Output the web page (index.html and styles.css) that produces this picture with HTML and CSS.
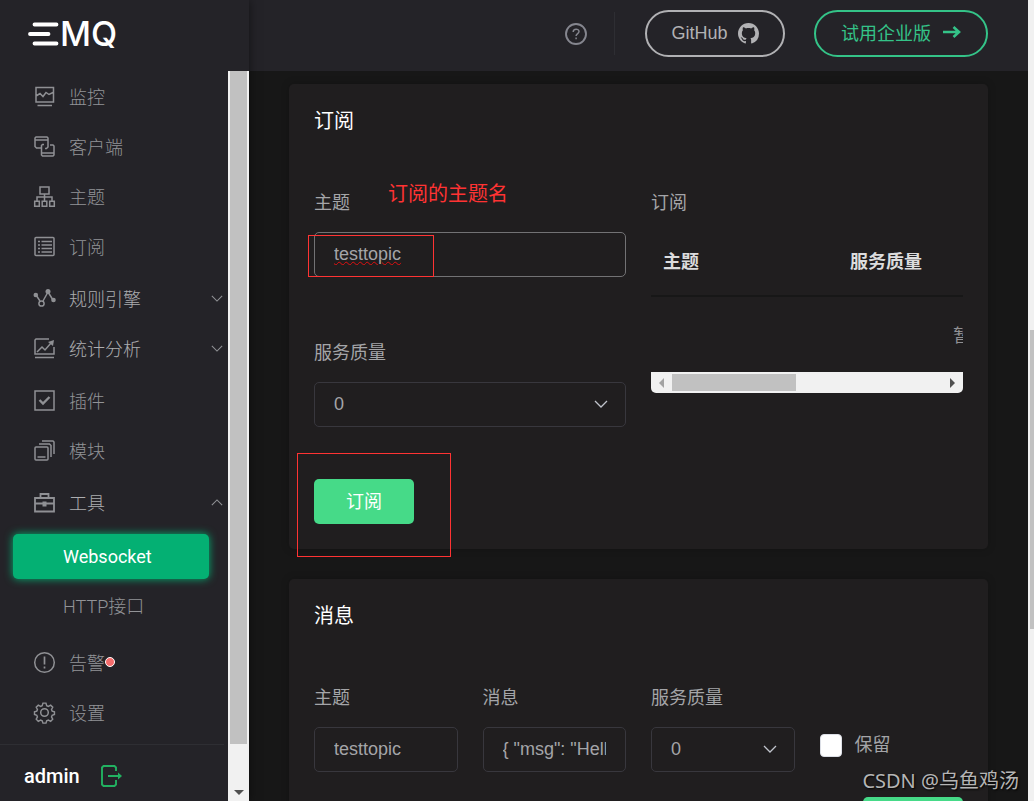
FILE: index.html
```html
<!DOCTYPE html>
<html lang="zh-CN">
<head>
<meta charset="utf-8">
<title>EMQ - Websocket</title>
<link rel="stylesheet" href="styles.css">
</head>
<body>
<svg class="defs" aria-hidden="true">
  <symbol id="down" viewBox="0 0 14 8"><path d="M1 1l6 6 6-6" fill="none" stroke="currentColor" stroke-width="1.3"/></symbol>
</svg>
<div class="app">
  <aside class="sidebar">
    <a class="logo" href="#" aria-label="EMQ">
      <svg class="logo-bars" viewBox="0 0 33 26"><path d="M7.500 3.500H29.500M3 13H21.500M7.500 22.500H29.500" fill="none" stroke="#fff" stroke-width="3.800" stroke-linecap="round"/></svg>
      <span class="logo-text">MQ</span>
    </a>
    <div class="sidebar-body">
      <div class="sidebar-content">
        <nav class="nav">
          <ul class="group">
            <li><a class="item" href="#"><svg class="icon" viewBox="0 0 21 21"><path d="M2 1.500h17.500v14.500H2zM3.500 19.500h14.500M2 10l4-2.500 3 3 3-4 3 2 4-2"/></svg>监控</a></li>
            <li><a class="item" href="#"><svg class="icon" viewBox="0 0 21 21"><path d="M5 12H2.500L1 10.500V2l1-1h11l1 1v4M1 4h13M10 8.500H8.500l-1 1V19l1 1H19l1-1V10l-1-1h-3M7.500 17H20M7.500 12H5M14 6v5l-1.500 1.500H11"/></svg>客户端</a></li>
            <li><a class="item" href="#"><svg class="icon" viewBox="0 0 21 21"><path d="M6 1h9v7H6zM10.500 8v7M3 15v-4h15v4M.7 15.300h4.600v5H.7zM8.200 15.300h4.600v5H8.200zM15.700 15.300h4.600v5h-4.600z"/></svg>主题</a></li>
            <li><a class="item" href="#"><svg class="icon" viewBox="0 0 21 21"><rect x="1" y="1.500" width="19" height="18" rx="1"/><path d="M4 5.500h2M7.500 5.500H18M4 9h2M7.500 9H18M4 12.500h2M7.500 12.500H18M4 16h2M7.500 16H18"/></svg>订阅</a></li>
          </ul>
          <ul class="group">
            <li><a class="item bright" href="#"><svg class="icon" viewBox="0 0 21 21"><path d="M2 7l4 6M9 13l5-9M14 4l5 8"/><circle cx="7.500" cy="15.500" r="2.600"/><g fill="currentColor" stroke="none"><circle cx="1.800" cy="7" r="2.300"/><circle cx="14" cy="3.500" r="2.500"/><circle cx="19.500" cy="12" r="2.300"/></g></svg>规则引擎<svg class="arrow"><use href="#down"/></svg></a></li>
            <li><a class="item bright" href="#"><svg class="icon" viewBox="0 0 21 21"><path d="M15 1H2L1 2v14h19V9M1 19.500h19M3 14l5-5 3 3 6-7"/><path d="M14 4l6-2-1 6z" fill="currentColor" stroke="none"/></svg>统计分析<svg class="arrow"><use href="#down"/></svg></a></li>
          </ul>
          <ul class="group">
            <li><a class="item" href="#"><svg class="icon" viewBox="0 0 21 21"><path d="M1 1h19v19H1z"/><path d="M5.500 10l3.500 3.500L15.500 7" stroke-width="2.400"/></svg>插件</a></li>
            <li><a class="item" href="#"><svg class="icon" viewBox="0 0 21 21"><rect x="1" y="7" width="13" height="13" rx="1"/><path d="M3.500 17h8M5 4h10.500L17 5.500V17M8 1h11l1 1v12"/></svg>模块</a></li>
          </ul>
          <ul class="group">
            <li><a class="item bright" href="#"><svg class="icon" viewBox="0 0 21 21"><path d="M1 6h19v13.500H1zM1 11.500h19M6.500 6V2h8v4" stroke-width="1.800"/><path d="M8.500 9.500h4v5h-4z" fill="currentColor" stroke="none"/></svg>工具<svg class="arrow up"><use href="#down"/></svg></a>
              <ul class="sub">
                <li><a class="sub-item active" href="#">Websocket</a></li>
                <li><a class="sub-item" href="#">HTTP接口</a></li>
              </ul>
            </li>
          </ul>
          <ul class="group">
            <li><a class="item" href="#"><svg class="icon" viewBox="0 0 21 21"><circle cx="10.500" cy="10.500" r="9.800"/><path d="M10.500 4.500v8M10.500 14.500v2" stroke-width="1.700"/></svg><span class="alarm">告警<i class="dot"></i></span></a></li>
            <li><a class="item" href="#"><svg class="icon" viewBox="0 0 21 21"><circle cx="10.500" cy="10.500" r="3.800"/><path d="M8.900 1h3.200l.7 2.600 1.800.8 2.400-1.300 2.200 2.200-1.300 2.400.7 1.700 2.400.7v2.800l-2.400.9-.7 1.700 1.300 2.400-2.200 2.200-2.400-1.300-1.800.7-.7 2.500H8.900l-.8-2.500-1.700-.7L4 20.100l-2.200-2.200 1.300-2.400-.7-1.700L0 12.900v-2.800l2.400-.7.700-1.700-1.300-2.400L4 3.100l2.400 1.300 1.700-.8z" transform="translate(.5 .2) scale(.95)"/></svg>设置</a></li>
          </ul>
        </nav>
        <div class="user">
          <span class="user-name">admin</span>
          <button class="logout" type="button" aria-label="退出"><svg viewBox="0 0 21 22"><path d="M15 6V2.500L13.500 1h-11L1 2.500v17L2.500 21h11l1.500-1.500V15M7 11h12" fill="none" stroke="currentColor" stroke-width="1.900"/><path d="M17 7.500l4 3.500-4 3.500z" fill="currentColor"/></svg></button>
        </div>
      </div>
      <div class="v-scroll" aria-hidden="true"><div class="v-thumb"></div><i class="tri tri-down"></i></div>
    </div>
  </aside>

  <div class="page">
    <header class="topbar">
      <a class="help" href="#" aria-label="帮助"><svg viewBox="0 0 22 22" fill="none" stroke="currentColor"><circle cx="11" cy="11" r="10" stroke-width="1.900"/><path d="M8.200 9c0-3.800 5.800-3.700 5.800-.4 0 2-2.900 2.100-2.900 4.400M11.100 14.500v1.800" stroke-width="1.500"/></svg></a>
      <span class="divider"></span>
      <a class="pill" href="#">GitHub<svg class="octo" viewBox="0 0 16 16"><path fill="currentColor" d="M8 0C3.580 0 0 3.580 0 8c0 3.540 2.290 6.530 5.470 7.590.4.070.55-.17.55-.38 0-.19-.01-.82-.01-1.490-2.010.37-2.530-.49-2.690-.94-.09-.23-.48-.94-.82-1.130-.28-.15-.68-.52-.01-.53.63-.01 1.080.58 1.230.82.72 1.210 1.870.87 2.330.66.07-.52.28-.87.51-1.070-1.780-.2-3.640-.89-3.640-3.950 0-.87.31-1.590.82-2.150-.08-.2-.36-1.020.08-2.120 0 0 .67-.21 2.200.82.64-.18 1.320-.27 2-.27s1.360.09 2 .27c1.530-1.040 2.200-.82 2.200-.82.44 1.100.16 1.920.08 2.120.51.56.82 1.270.82 2.150 0 3.070-1.870 3.750-3.650 3.950.29.25.54.73.54 1.480 0 1.070-.01 1.930-.01 2.200 0 .21.15.46.55.38A8.010 8.010 0 0016 8c0-4.420-3.580-8-8-8z"/></svg></a>
      <a class="pill green" href="#">试用企业版<svg class="go" viewBox="0 0 18 12"><path d="M0 6h16M10.500 1l5.500 5-5.500 5" fill="none" stroke="currentColor" stroke-width="2.600"/></svg></a>
    </header>
    <main class="content">
      <section class="card">
        <h2 class="title">订阅</h2>
        <div class="cols two">
          <form class="form">
            <div class="field">
              <label class="label" for="sub-topic">主题</label>
              <div class="control">
                <input class="box focus" id="sub-topic" type="text" value="testtopic">
                <i class="mark mark-input"></i>
                <span class="note">订阅的主题名</span>
              </div>
            </div>
            <div class="field">
              <label class="label" for="sub-qos">服务质量</label>
              <div class="control">
                <select class="box" id="sub-qos"><option>0</option></select>
                <svg class="caret"><use href="#down"/></svg>
              </div>
            </div>
            <div class="submit">
              <button class="btn" type="button">订阅</button>
              <i class="mark mark-button"></i>
            </div>
          </form>
          <div class="list">
            <p class="label">订阅</p>
            <div class="table-wrap">
              <table class="table">
                <thead><tr><th class="col-topic">主题</th><th>服务质量</th></tr></thead>
                <tbody><tr><td colspan="2">暂无数据</td></tr></tbody>
              </table>
            </div>
            <div class="h-scroll" aria-hidden="true"><i class="tri tri-left"></i><div class="h-track"><div class="h-thumb"></div></div><i class="tri tri-right"></i></div>
          </div>
        </div>
      </section>

      <section class="card">
        <h2 class="title">消息</h2>
        <form>
          <div class="cols four">
            <div class="field">
              <label class="label" for="msg-topic">主题</label>
              <input class="box" id="msg-topic" type="text" value="testtopic">
            </div>
            <div class="field">
              <label class="label" for="msg-body">消息</label>
              <input class="box" id="msg-body" type="text" value='{ "msg": "Hello, World!" }'>
            </div>
            <div class="field">
              <label class="label" for="msg-qos">服务质量</label>
              <div class="control">
                <select class="box" id="msg-qos"><option>0</option></select>
                <svg class="caret"><use href="#down"/></svg>
              </div>
            </div>
            <label class="retain"><input class="check" type="checkbox">保留</label>
          </div>
          <div class="publish"><button class="btn" type="button" aria-label="发布"></button></div>
        </form>
      </section>
    </main>
  </div>
  <div class="page-scroll" aria-hidden="true"><div class="page-thumb"></div></div>
  <div class="watermark">CSDN @乌鱼鸡汤</div>
</div>
</body>
</html>
```

FILE: styles.css
```css
* { box-sizing: border-box; }
body {
  margin: 0;
  background: #171717;
  color: #a4a5a8;
  font: 18px "Liberation Sans", "Noto Sans CJK SC", sans-serif;
}
ul, h2, p { margin: 0; padding: 0; list-style: none; }
a { color: inherit; text-decoration: none; }
button, input, select { font: inherit; color: inherit; }
svg { display: block; flex: none; }
.defs { position: absolute; width: 0; height: 0; }

.app { position: relative; display: flex; height: 100vh; overflow: hidden; }

/* Sidebar */
.sidebar {
  position: relative;
  z-index: 1;
  display: flex;
  flex-direction: column;
  flex: none;
  width: 249px;
  background: #242328;
  box-shadow: 0 0 10px rgba(0, 0, 0, 0.5);
}
.logo { display: flex; align-items: center; height: 71px; padding: 0 0 3px 27px; color: #fff; }
.logo-bars { width: 33px; height: 26px; }
.logo-text { font: 500 34px/36px Inter, sans-serif; }
.sidebar-body { display: flex; flex: 1; min-height: 0; }
.sidebar-content { display: flex; flex-direction: column; flex: 1; min-width: 0; }
.nav {
  display: flex;
  flex-direction: column;
  flex: 1;
  gap: 2px;
  min-height: 0;
  overflow: hidden;
  color: #929397;
  font-family: Roboto, "Noto Sans CJK SC", sans-serif;
  font-weight: 300;
}
.item { display: flex; align-items: center; gap: 14px; height: 50px; padding: 0 5px 0 34px; }
.bright { color: #acadb0; }
.icon { width: 21px; height: 21px; fill: none; stroke: #8f9094; stroke-width: 1.5; color: #8f9094; overflow: visible; }
.arrow { width: 12px; height: 7px; margin-left: auto; color: #8f9094; }
.up { transform: rotate(180deg); }
.sub { padding: 5px 0 3px; }
.sub li { padding: 2px 19px 3px 13px; }
.sub-item { display: block; height: 45px; padding-left: 50px; border-radius: 5px; line-height: 46px; }
.active { background: #04b073; color: #fff; font-weight: 400; box-shadow: 0 0 8px #04b073; }
.alarm { position: relative; }
.dot {
  position: absolute;
  right: -10px;
  top: 50%;
  width: 10px;
  height: 10px;
  margin-top: -5px;
  border: 1px solid #fff;
  border-radius: 50%;
  background: #f56c6c;
}
.user {
  display: flex;
  align-items: center;
  gap: 21px;
  height: 57px;
  margin-right: 4px;
  padding: 6px 0 0 24px;
  border-top: 1px solid #2e2e33;
}
.user-name { color: #fff; font: 500 20px/24px Roboto, sans-serif; }
.logout { width: 21px; height: 22px; padding: 0; border: 0; background: none; color: #22b161; }

.v-scroll { display: flex; flex-direction: column; align-items: center; justify-content: space-between; width: 21px; padding: 0 2px 6px; background: #f1f1f1; }
.v-thumb { width: 100%; height: 93%; background: #c1c1c1; }
.tri { border: 5px solid transparent; }
.tri-down { border-top-color: #505050; border-bottom: 0; }
.tri-left { border-right-color: #a3a3a3; border-left: 0; }
.tri-right { border-left-color: #505050; border-right: 0; }

/* Page */
.page { flex: 1; min-width: 0; }
.topbar { display: flex; align-items: center; justify-content: flex-end; height: 71px; padding: 0 40px 4px 0; background: #242328; }
.help { color: #85868f; }
.help svg { width: 22px; height: 22px; }
.divider { width: 1px; height: 43px; margin: 0 30px 0 27px; background: #2e2e33; }
.pill {
  display: flex;
  align-items: center;
  justify-content: center;
  gap: 10px;
  width: 140px;
  height: 47px;
  border: 2px solid #b1b1b4;
  border-radius: 24px;
  color: #b1b1b4;
}
.green { width: 174px; gap: 12px; margin-left: 29px; padding-bottom: 3px; border-color: #34c388; color: #34c388; }
.octo { width: 21px; height: 21px; }
.go { width: 18px; height: 12px; }

.content { display: flex; flex-direction: column; gap: 30px; padding: 13px 40px; }
.card { padding: 25px; border-radius: 5px; background: #201e1f; box-shadow: 0 0 8px rgba(0, 0, 0, 0.2); }
.title { margin-bottom: 58px; color: #fff; font-size: 20px; font-weight: 400; line-height: 24px; }
.cols { display: grid; gap: 25px; }
.two { grid-template-columns: repeat(2, minmax(0, 1fr)); }
.four { grid-template-columns: repeat(4, minmax(0, 1fr)); }
.form { display: flex; flex-direction: column; gap: 64px; }
.label { display: block; margin-bottom: 16px; line-height: 25px; }
.control { position: relative; }
.box {
  display: block;
  width: 100%;
  height: 45px;
  padding: 0 19px;
  border: 1px solid #38373d;
  border-radius: 5px;
  outline: 0;
  background: transparent;
  appearance: none;
}
select.box { padding-bottom: 2px; }
.focus { border-color: #727274; text-decoration: underline wavy #e01010 1px; }
.caret { position: absolute; right: 18px; top: 18px; width: 14px; height: 8px; color: #c0c4cc; pointer-events: none; }
.submit { position: relative; margin-top: -12px; }
.btn { display: block; width: 100px; height: 45px; padding: 0 0 4px; border: 0; border-radius: 5px; background: #46da88; color: #fff; }

.mark { position: absolute; border: 1px solid #f33; }
.mark-input { left: -6px; top: 3px; width: 126px; height: 42px; }
.mark-button { left: -17px; top: -26px; width: 154px; height: 104px; }
.note { position: absolute; left: 74px; top: -51px; color: #f33; font-size: 20px; line-height: 26px; white-space: nowrap; }

.list .label { margin-bottom: 11px; }
.table-wrap { overflow: hidden; }
.table { width: 676px; border-collapse: collapse; table-layout: fixed; }
.table th { height: 69px; padding: 0 12px 2px; border-bottom: 2px solid #171717; color: #dcdcdd; text-align: left; }
.table td { height: 76px; padding: 0 0 2px; text-align: center; color: #909093; }
.col-topic { width: 187px; }
.h-scroll { display: flex; align-items: center; justify-content: space-between; height: 21px; padding: 0 8px; border-radius: 0 0 5px 5px; background: #f1f1f1; }
.h-track { flex: 1; margin: 0 8px; }
.h-thumb { width: 46%; height: 17px; background: #c1c1c1; }

.retain { display: flex; align-items: center; gap: 13px; height: 36px; margin-top: 41px; line-height: 24px; }
.check { width: 22px; height: 23px; margin: 0; border: 1px solid #dcdfe6; border-radius: 4px; background: #fff; appearance: none; }
.publish { display: flex; justify-content: flex-end; margin-top: 25px; }

.page-scroll { display: grid; grid-template-rows: 330fr 299fr 172fr; flex: none; width: 6px; padding-left: 2px; background: #f1f1f1; }
.page-thumb { grid-row: 2; background: #c1c1c1; }
.watermark {
  position: absolute;
  right: 15px;
  bottom: 6px;
  color: #b5b5b5;
  font: 20px/28px "Noto Sans", "Noto Sans CJK SC", sans-serif;
  text-shadow: 1px 1px 2px #000;
}
```
